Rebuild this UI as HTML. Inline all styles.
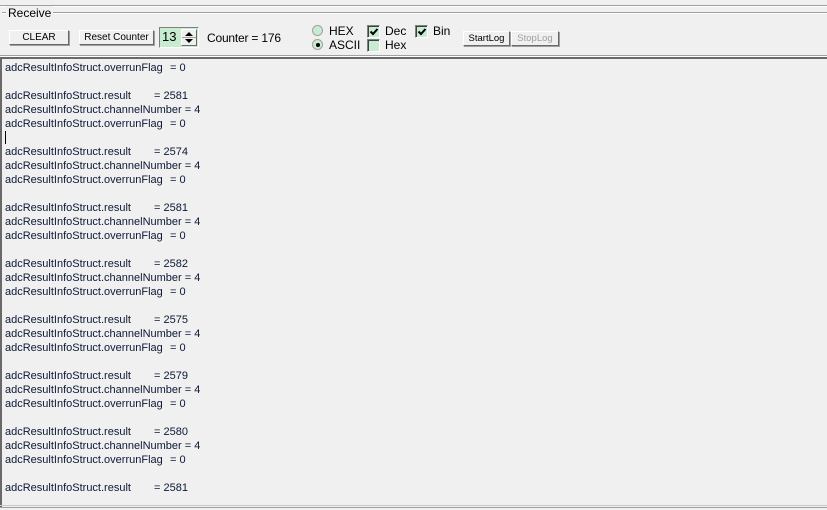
<!DOCTYPE html>
<html><head><meta charset="utf-8"><style>
*{margin:0;padding:0;box-sizing:border-box}
body{width:827px;height:510px;background:#f0f0f0;position:relative;overflow:hidden;font-family:"Liberation Sans",Tahoma,sans-serif;font-size:11px;color:#000}
.a{position:absolute}
.hl{position:absolute;left:0;width:827px;height:1px}
.btn{position:absolute;height:15px;background:#f0f0f0;border:1px solid;border-color:#fff #696969 #696969 #fff;box-shadow:1px 1px 0 #a0a0a0;text-align:center;font-size:10px;line-height:13px}
.cb{position:absolute;width:13px;height:13px;background:#c8ecd0;border:1px solid;border-color:#808080 #fff #fff #808080;box-shadow:inset 1px 1px 0 #404040}
.rd{position:absolute;width:11px;height:11px;border-radius:50%;background:#c8ecd0;border:1px solid #a0a0a0}
.t{position:absolute;left:5px;margin-top:1px;color:#0b1836;font-size:11px;line-height:14px;white-space:pre}
.v{position:absolute}
</style></head><body>
<div class="hl" style="top:5px;background:#a0a0a0"></div><div class="hl" style="top:6px;background:#fff"></div>
<div class="hl" style="top:12px;background:#a0a0a0;left:2px"></div><div class="hl" style="top:13px;background:#fff;left:2px"></div>
<div class="a" style="left:6px;top:6px;padding:0 2px;background:#f0f0f0;font-size:12px">Receive</div>
<div class="btn" style="left:9px;top:30px;width:60px">CLEAR</div>
<div class="btn" style="left:79px;top:30px;width:75px">Reset Counter</div>
<div class="a" style="left:159px;top:27px;width:40px;height:21px;border:1px solid;border-color:#808080 #fff #fff #808080;background:#c8ecd0"></div>
<div class="a" style="left:162px;top:29px;font-size:13px">13</div>
<div class="a" style="left:181px;top:29px;width:16px;height:17px;background:#f0f0f0;border:1px solid;border-color:#fff #696969 #696969 #fff">
<svg width="14" height="15" style="position:absolute;left:0;top:0"><path d="M3 6L7 2L11 6Z M3 9L11 9L7 13Z" fill="#000"/><line x1="0" y1="7.5" x2="14" y2="7.5" stroke="#a0a0a0"/></svg></div>
<div class="a" style="left:207px;top:31px;font-size:12px;letter-spacing:-0.2px">Counter = 176</div>
<div class="rd" style="left:312px;top:25px"></div>
<div class="rd" style="left:312px;top:39px"></div><div class="a" style="left:316px;top:43px;width:4px;height:4px;border-radius:50%;background:#000"></div>
<div class="a" style="left:329px;top:24px;font-size:12px">HEX</div>
<div class="a" style="left:329px;top:38px;font-size:12px">ASCII</div>
<div class="cb" style="left:367px;top:25px"></div><svg class="a" style="left:369px;top:27px" width="10" height="10"><path d="M1.5 4.5L4 7L8.5 2" stroke="#000" stroke-width="2" fill="none"/></svg>
<div class="cb" style="left:367px;top:39px"></div>
<div class="a" style="left:385px;top:24px;font-size:12px">Dec</div>
<div class="a" style="left:385px;top:38px;font-size:12px">Hex</div>
<div class="cb" style="left:415px;top:25px"></div><svg class="a" style="left:417px;top:27px" width="10" height="10"><path d="M1.5 4.5L4 7L8.5 2" stroke="#000" stroke-width="2" fill="none"/></svg>
<div class="a" style="left:433px;top:24px;font-size:12px">Bin</div>
<div class="btn" style="left:463px;top:31px;width:47px;font-size:9.5px">StartLog</div>
<div class="btn" style="left:511px;top:31px;width:48px;font-size:9.5px;color:#a0a0a0">StopLog</div>
<div class="hl" style="top:55px;background:#a0a0a0"></div><div class="hl" style="top:56px;background:#fff"></div>
<div class="hl" style="top:57px;height:2px;background:#696969"></div>
<div class="a" style="left:0;top:57px;width:2px;height:450px;background:#696969"></div>
<div class="hl" style="top:505px;background:#c8c8c8"></div><div class="hl" style="top:507px;background:#a0a0a0"></div>
<div class="t" style="top:60px">adcResultInfoStruct.overrunFlag<span class="v" style="left:165px">= 0</span></div>
<div class="t" style="top:88px">adcResultInfoStruct.result<span class="v" style="left:149px">= 2581</span></div>
<div class="t" style="top:102px">adcResultInfoStruct.channelNumber = 4</div>
<div class="t" style="top:116px">adcResultInfoStruct.overrunFlag<span class="v" style="left:165px">= 0</span></div>
<div class="a" style="left:5px;top:131px;width:1px;height:13px;background:#000"></div>
<div class="t" style="top:144px">adcResultInfoStruct.result<span class="v" style="left:149px">= 2574</span></div>
<div class="t" style="top:158px">adcResultInfoStruct.channelNumber = 4</div>
<div class="t" style="top:172px">adcResultInfoStruct.overrunFlag<span class="v" style="left:165px">= 0</span></div>
<div class="t" style="top:200px">adcResultInfoStruct.result<span class="v" style="left:149px">= 2581</span></div>
<div class="t" style="top:214px">adcResultInfoStruct.channelNumber = 4</div>
<div class="t" style="top:228px">adcResultInfoStruct.overrunFlag<span class="v" style="left:165px">= 0</span></div>
<div class="t" style="top:256px">adcResultInfoStruct.result<span class="v" style="left:149px">= 2582</span></div>
<div class="t" style="top:270px">adcResultInfoStruct.channelNumber = 4</div>
<div class="t" style="top:284px">adcResultInfoStruct.overrunFlag<span class="v" style="left:165px">= 0</span></div>
<div class="t" style="top:312px">adcResultInfoStruct.result<span class="v" style="left:149px">= 2575</span></div>
<div class="t" style="top:326px">adcResultInfoStruct.channelNumber = 4</div>
<div class="t" style="top:340px">adcResultInfoStruct.overrunFlag<span class="v" style="left:165px">= 0</span></div>
<div class="t" style="top:368px">adcResultInfoStruct.result<span class="v" style="left:149px">= 2579</span></div>
<div class="t" style="top:382px">adcResultInfoStruct.channelNumber = 4</div>
<div class="t" style="top:396px">adcResultInfoStruct.overrunFlag<span class="v" style="left:165px">= 0</span></div>
<div class="t" style="top:424px">adcResultInfoStruct.result<span class="v" style="left:149px">= 2580</span></div>
<div class="t" style="top:438px">adcResultInfoStruct.channelNumber = 4</div>
<div class="t" style="top:452px">adcResultInfoStruct.overrunFlag<span class="v" style="left:165px">= 0</span></div>
<div class="t" style="top:480px">adcResultInfoStruct.result<span class="v" style="left:149px">= 2581</span></div>
</body></html>
